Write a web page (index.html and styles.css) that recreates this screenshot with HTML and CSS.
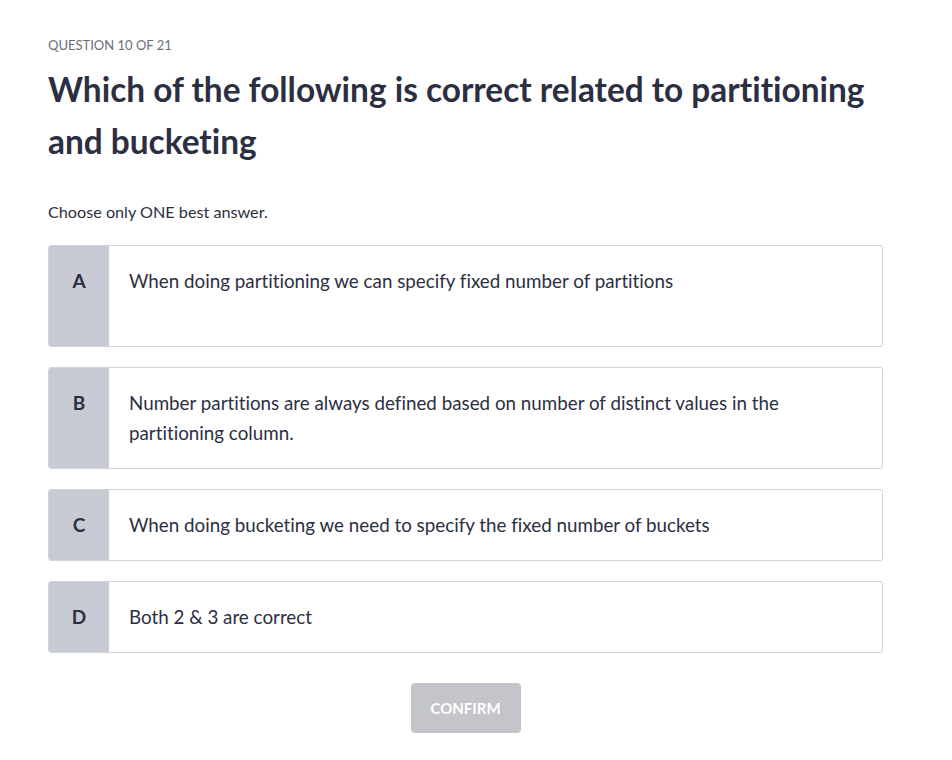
FILE: index.html
```html
<!DOCTYPE html>
<html lang="en">
<head>
<meta charset="utf-8">
<title>Question 10 of 21</title>
<link rel="stylesheet" href="styles.css">
</head>
<body>
<main class="quiz">
  <div class="counter">QUESTION 10 OF 21</div>
  <h1 class="question">Which of the following is correct related to partitioning and bucketing</h1>
  <p class="hint">Choose only ONE best answer.</p>
  <ul class="options">
    <li class="option option-tall">
      <span class="letter">A</span>
      <span class="text">When doing partitioning we can specify fixed number of partitions</span>
    </li>
    <li class="option">
      <span class="letter">B</span>
      <span class="text">Number partitions are always defined based on number of distinct values in the partitioning column.</span>
    </li>
    <li class="option">
      <span class="letter">C</span>
      <span class="text">When doing bucketing we need to specify the fixed number of buckets</span>
    </li>
    <li class="option">
      <span class="letter">D</span>
      <span class="text">Both 2 &amp; 3 are correct</span>
    </li>
  </ul>
  <div class="actions">
    <button class="confirm" disabled>CONFIRM</button>
  </div>
</main>
</body>
</html>
```
FILE: styles.css
```css
* { box-sizing: border-box; }
html, body { margin: 0; padding: 0; background: #ffffff; }
body {
  font-family: Lato, "Open Sans", "Liberation Sans", sans-serif;
  color: #2c2f42;
  font-variant-ligatures: none;
}
.quiz {
  width: 835px;
  margin-left: 48px;
  padding-top: 37px;
}
.counter {
  font-size: 13px;
  line-height: 16px;
  color: #686f7a;
}
.question {
  margin: 10px 0 0;
  font-size: 33.4px;
  line-height: 52px;
  font-weight: 700;
  color: #2c2f42;
}
.hint {
  margin: 35px 0 0;
  font-size: 16.2px;
  line-height: 20px;
}
.options {
  list-style: none;
  margin: 23px 0 0;
  padding: 0;
  display: flex;
  flex-direction: column;
  gap: 20px;
}
.option {
  display: flex;
  border: 1px solid #d1d3da;
  border-radius: 3px;
  overflow: hidden;
  min-height: 72px;
}
.option-tall { min-height: 102px; }
.letter {
  flex: 0 0 60px;
  background: #c9cbd4;
  text-align: center;
  font-weight: 700;
  font-size: 19px;
  line-height: 30px;
  padding-top: 20px;
}
.text {
  flex: 1;
  padding: 20px;
  font-size: 18.8px;
  line-height: 30px;
}
.actions {
  display: flex;
  justify-content: center;
  margin-top: 30px;
}
.confirm {
  width: 110px;
  height: 50px;
  border: none;
  border-radius: 4px;
  background: #c4c5ca;
  color: #ffffff;
  font-family: inherit;
  font-weight: 700;
  font-size: 15px;
  cursor: default;
}
```
